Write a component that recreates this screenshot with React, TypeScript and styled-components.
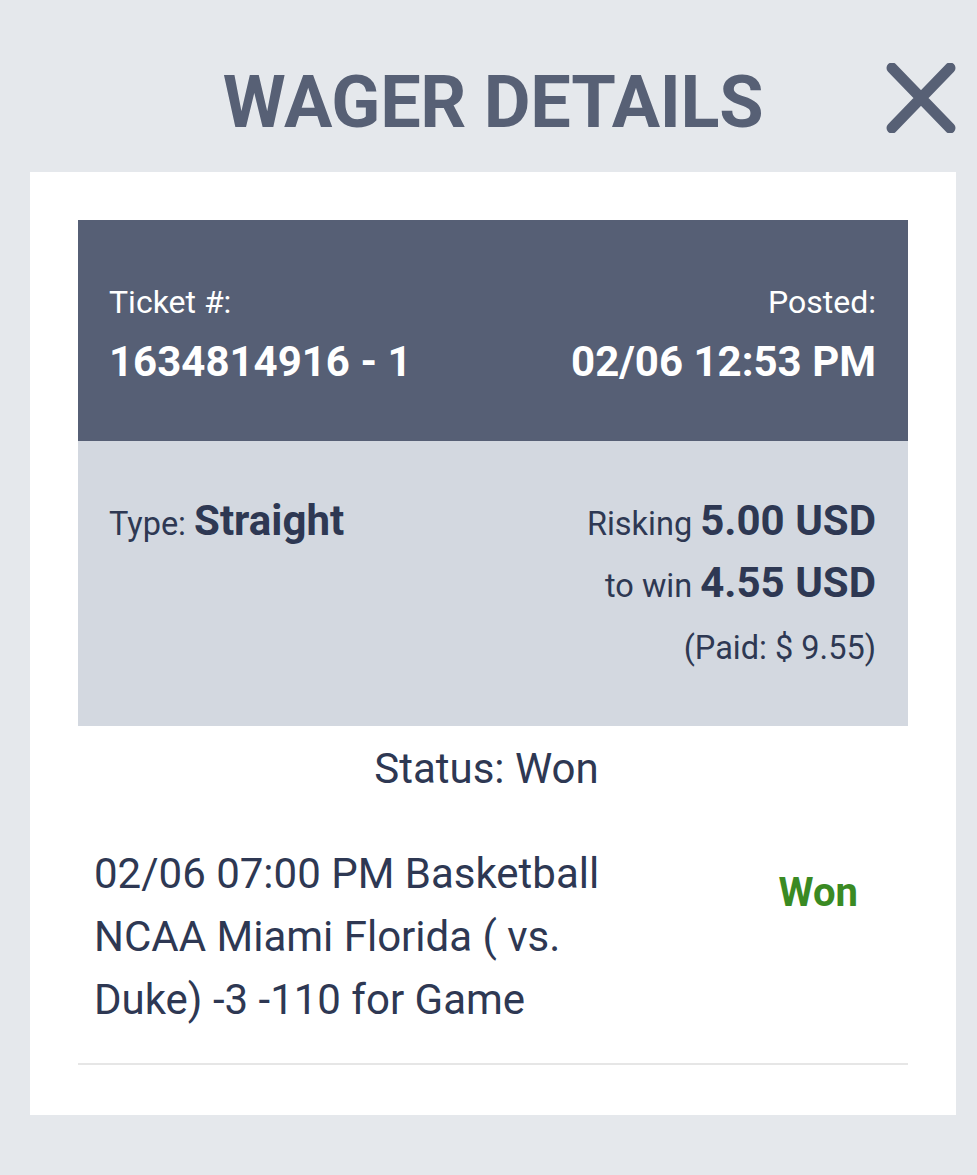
import React from "react";
import styled, { createGlobalStyle } from "styled-components";

const Global = createGlobalStyle`
  html, body { margin: 0; padding: 0; background: #e5e8ec; }
  body { font-family: Roboto, "Noto Sans", Arial, sans-serif; }
`;

const Page = styled.div`
  width: 977px;
  min-height: 1175px;
  background: #e5e8ec;
  box-sizing: border-box;
  padding: 0 21px 0 30px;
`;

const Header = styled.header`
  height: 172px;
  box-sizing: border-box;
  padding-top: 34px;
  display: grid;
  grid-template-columns: 1fr auto 1fr;
  align-items: center;
`;

const Title = styled.h1`
  grid-column: 2;
  margin: 0;
  font-size: 72px;
  line-height: 1;
  font-weight: 700;
  color: #576075;
  letter-spacing: -0.3px;
`;

const CloseButton = styled.button`
  grid-column: 3;
  justify-self: end;
  width: 70px;
  height: 70px;
  padding: 0;
  margin-top: -10px;
  border: 0;
  background: none;
  display: flex;
  cursor: pointer;
`;

const Card = styled.section`
  background: #ffffff;
  padding: 48px 48px 50px;
`;

const TicketHead = styled.div`
  background: #565f75;
  color: #ffffff;
  display: flex;
  justify-content: space-between;
  padding: 62px 32px 53px 31px;
`;

const HeadCol = styled.div<{ $right?: boolean }>`
  display: flex;
  flex-direction: column;
  gap: 14px;
  align-items: ${(p) => (p.$right ? "flex-end" : "flex-start")};
`;

const HeadLabel = styled.div`
  font-size: 32px;
  line-height: 40px;
`;

const HeadValue = styled.div`
  font-size: 42px;
  line-height: 52px;
  font-weight: 700;
`;

const Summary = styled.div`
  background: #d3d8e0;
  color: #2e3853;
  display: flex;
  justify-content: space-between;
  padding: 52px 32px 47px 31px;
  font-size: 32.5px;
  line-height: 62px;
`;

const SummaryCol = styled.div<{ $right?: boolean }>`
  text-align: ${(p) => (p.$right ? "right" : "left")};
`;

const Strong = styled.b`
  font-size: 42px;
  line-height: 1;
  font-weight: 700;
`;

const Status = styled.div`
  text-align: center;
  color: #2e3853;
  font-size: 42px;
  line-height: 60px;
  padding: 13px 13px 0 0;
`;

const BetRow = styled.div`
  display: flex;
  justify-content: space-between;
  align-items: flex-start;
  padding: 43px 50px 32px 16px;
  border-bottom: 2px solid #e6e6e6;
`;

const BetText = styled.div`
  max-width: 540px;
  color: #2e3853;
  font-size: 42px;
  line-height: 63px;
`;

const BetResult = styled.div`
  color: #3a8a23;
  font-size: 40px;
  line-height: 63px;
  font-weight: 700;
  margin-top: 19px;
`;

export default function App() {
  return (
    <>
      <Global />
      <Page>
        <Header>
          <Title>WAGER DETAILS</Title>
          <CloseButton aria-label="Close">
            <svg width="70" height="70" viewBox="0 0 70 70">
              <path
                d="M6 5 L64 65 M64 5 L6 65"
                stroke="#576075"
                strokeWidth="11"
                strokeLinecap="round"
                fill="none"
              />
            </svg>
          </CloseButton>
        </Header>
        <Card>
          <TicketHead>
            <HeadCol>
              <HeadLabel>Ticket #:</HeadLabel>
              <HeadValue>1634814916 - 1</HeadValue>
            </HeadCol>
            <HeadCol $right>
              <HeadLabel>Posted:</HeadLabel>
              <HeadValue>02/06 12:53 PM</HeadValue>
            </HeadCol>
          </TicketHead>
          <Summary>
            <SummaryCol>
              Type: <Strong>Straight</Strong>
            </SummaryCol>
            <SummaryCol $right>
              <div>
                Risking <Strong>5.00 USD</Strong>
              </div>
              <div>
                to win <Strong>4.55 USD</Strong>
              </div>
              <div>(Paid: $ 9.55)</div>
            </SummaryCol>
          </Summary>
          <Status>Status: Won</Status>
          <BetRow>
            <BetText>
              02/06 07:00 PM Basketball NCAA Miami Florida ( vs. Duke) -3 -110 for Game
            </BetText>
            <BetResult>Won</BetResult>
          </BetRow>
        </Card>
      </Page>
    </>
  );
}
